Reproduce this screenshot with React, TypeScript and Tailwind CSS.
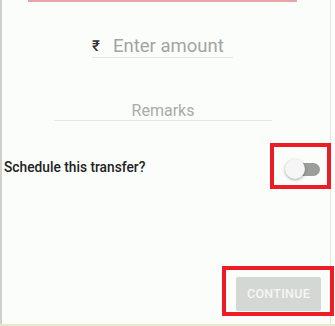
import React, { useState } from 'react';

// Transfer form: amount, remarks, schedule toggle and continue button
export default function App() {
  const [amount, setAmount] = useState('');
  const [remarks, setRemarks] = useState('');
  const [scheduled, setScheduled] = useState(false);

  return (
    <div
      className="w-[335px] h-[326px] bg-[#fbfdfb] flex flex-col overflow-hidden"
      style={{ fontFamily: 'Roboto, "Liberation Sans", sans-serif' }}
    >
      <div className="flex-1 flex flex-col w-[331px] border-l-2 border-r border-l-[#cfd1cf] border-r-[#e3e5e3]">
        {/* Top accent line */}
        <div className="ml-[26px] w-[269px] h-[2px] bg-[#e6a6a6]" />

        {/* Amount */}
        <div className="mt-[34px] ml-[90px] w-[141px] h-[22px] flex items-end border-b border-[#e6e8e6] pb-[1px]">
          <span className="text-[15px] leading-[20px] font-medium text-[#333] w-[21px]">₹</span>
          <input
            value={amount}
            onChange={(e) => setAmount(e.target.value)}
            placeholder="Enter amount"
            className="w-[118px] h-[20px] bg-transparent outline-none text-[18.5px] leading-[20px] text-[#333] placeholder:text-[#a2a4a2]"
          />
        </div>

        {/* Remarks */}
        <div className="mt-[41px] ml-[52px] w-[218px] h-[22px] border-b border-[#e6e8e6] pb-[2px]">
          <input
            value={remarks}
            onChange={(e) => setRemarks(e.target.value)}
            placeholder="Remarks"
            className="w-full h-[19px] bg-transparent outline-none text-center text-[16px] leading-[19px] text-[#333] placeholder:text-[#a9aba9]"
          />
        </div>

        {/* Schedule toggle */}
        <div className="mt-[22px] flex items-center justify-between pl-[2px]">
          <span className="text-[13.75px] font-medium text-[#222] pt-[3px]">
            Schedule this transfer?
          </span>
          <div className="w-[61px] h-[46px] border-4 border-[#ee1c25] flex items-center pt-[6px] pl-[11px] mr-[-1px]">
            <button
              onClick={() => setScheduled(!scheduled)}
              className="relative w-[35px] h-[20px] flex items-center"
            >
              <span
                className={`absolute left-[5px] w-[30px] h-[13px] rounded-full ${
                  scheduled ? 'bg-[#f3a3a3]' : 'bg-[#9c9e9c]'
                }`}
              />
              <span
                className={`absolute top-0 w-[20px] h-[20px] rounded-full shadow-[0_1px_3px_rgba(0,0,0,0.35)] ${
                  scheduled ? 'left-[15px] bg-[#e53935]' : 'left-0 bg-[#f6f6f6]'
                }`}
              />
            </button>
          </div>
        </div>

        {/* Continue */}
        <div className="mt-[77px] ml-[220px] w-[112px] h-[50px] border-4 border-[#ee1c25] pt-[7px] pl-[10px]">
          <button
            disabled={!amount}
            className="w-[85px] h-[34px] rounded-[2px] bg-[#d4d8d4] text-[#f4f6f4] text-[12.5px] font-medium tracking-[0.3px]"
          >
            CONTINUE
          </button>
        </div>
        <div className="flex-1" />
      </div>
      <div className="h-[2px] bg-[#e9e8cc]" />
    </div>
  );
}
